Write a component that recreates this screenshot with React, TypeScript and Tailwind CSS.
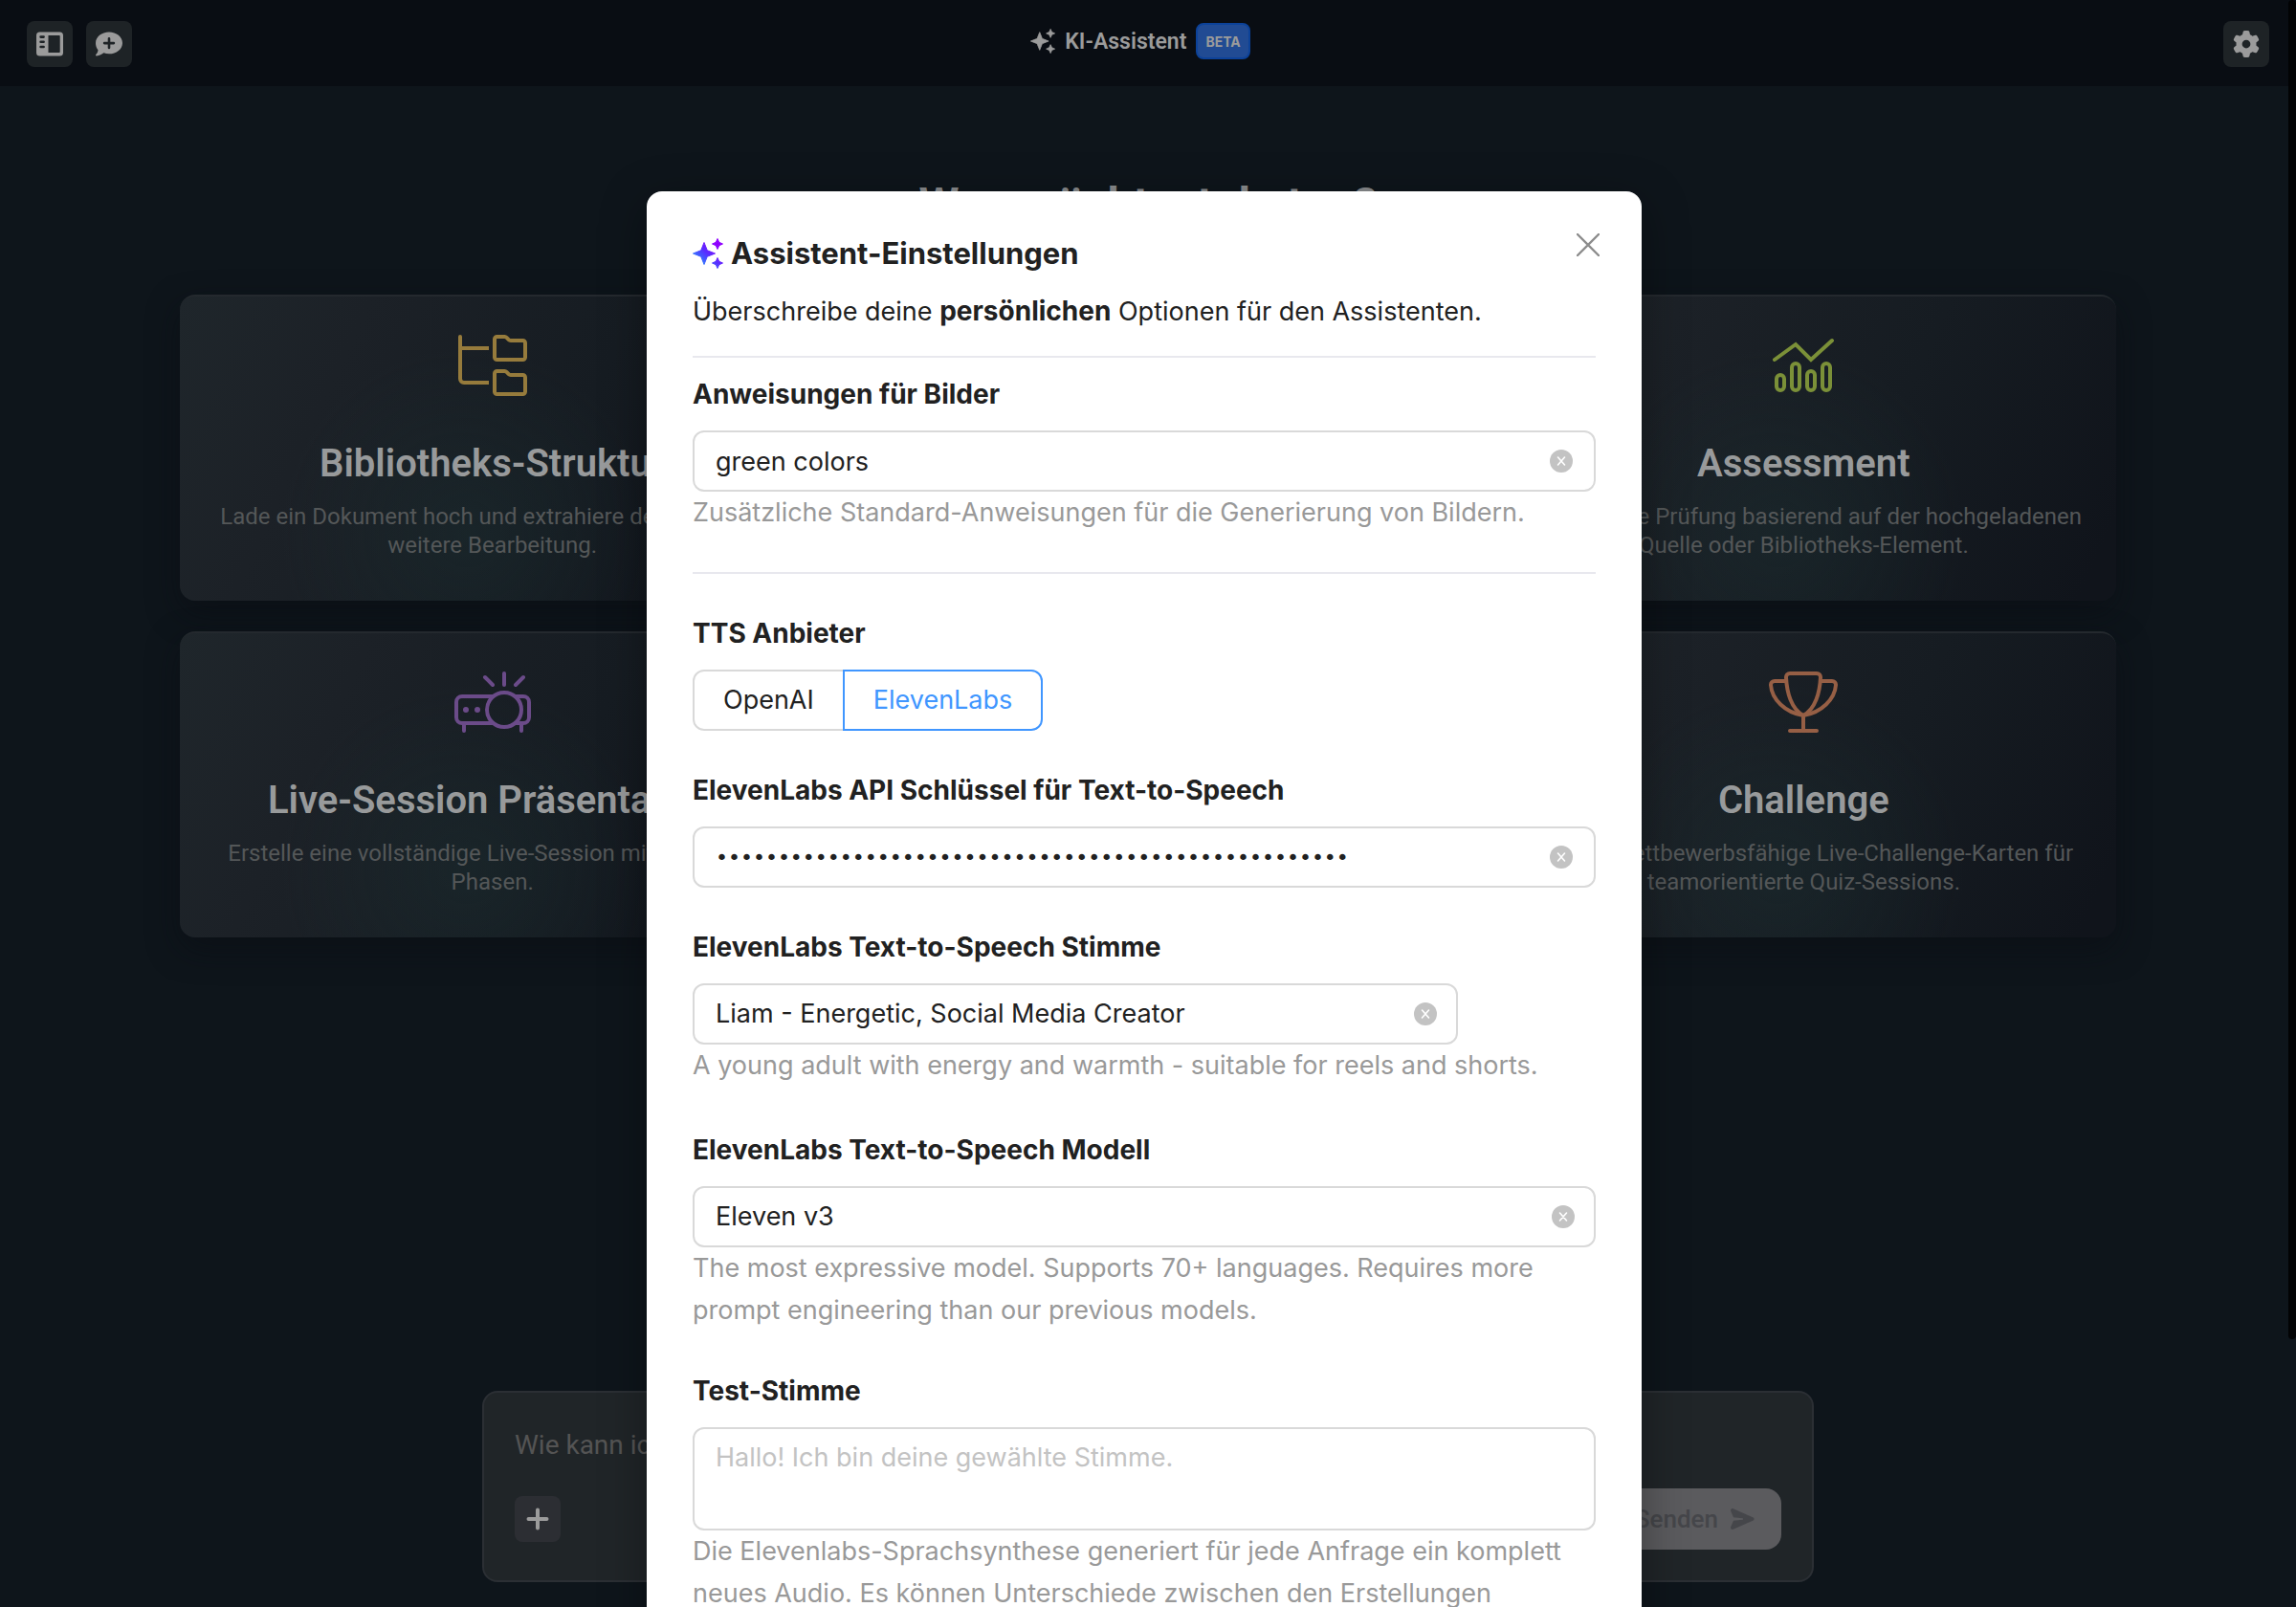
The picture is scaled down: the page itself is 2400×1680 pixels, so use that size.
import { ReactNode, useState } from "react";
import { FaGear } from "react-icons/fa6";

interface CardData {
  title: string;
  text: string;
  color: string;
  column: string;
  icon: ReactNode;
}

const CARDS: CardData[] = [
  {
    title: "Bibliotheks-Struktur",
    text: "Lade ein Dokument hoch und extrahiere den Inhalt für weitere Bearbeitung.",
    color: "text-[#967b3c]",
    column: "col-start-1",
    icon: <FolderTreeIcon />,
  },
  {
    title: "Assessment",
    text: "Erstelle eine Prüfung basierend auf der hochgeladenen Quelle oder Bibliotheks-Element.",
    color: "text-[#7b9038]",
    column: "col-start-3",
    icon: <ChartIcon />,
  },
  {
    title: "Live-Session Präsentation",
    text: "Erstelle eine vollständige Live-Session mit mehreren Phasen.",
    color: "text-[#6b4b89]",
    column: "col-start-1",
    icon: <ProjectorIcon />,
  },
  {
    title: "Challenge",
    text: "Erstelle wettbewerbsfähige Live-Challenge-Karten für teamorientierte Quiz-Sessions.",
    color: "text-[#965f45]",
    column: "col-start-3",
    icon: <TrophyIcon />,
  },
];

const PROVIDERS = ["OpenAI", "ElevenLabs"];

function SparklesPath() {
  return (
    <path
      strokeWidth="1"
      strokeLinejoin="round"
      d="M12 4.500l3 7.600a1.600 1.600 0 0 0 .9.9l7.600 3-7.600 3a1.600 1.600 0 0 0-.9.900l-3 7.600-3-7.600a1.600 1.600 0 0 0-.9-.900l-7.600-3 7.600-3a1.600 1.600 0 0 0 .9-.9zM26 .5l1.700 3.800 3.800 1.700-3.800 1.700-1.700 3.800-1.700-3.800-3.800-1.700 3.800-1.700zM26 20.500l1.700 3.800 3.800 1.700-3.800 1.700-1.700 3.800-1.700-3.800-3.800-1.700 3.800-1.700z"
    />
  );
}

function SidebarIcon() {
  return (
    <svg width="28" height="28" viewBox="0 0 28 28" fill="currentColor">
      <path
        fillRule="evenodd"
        d="M3.500 1.500h21A3.500 3.500 0 0 1 28 5v18a3.500 3.500 0 0 1-3.500 3.500h-21A3.500 3.500 0 0 1 0 23V5a3.500 3.500 0 0 1 3.500-3.500zM12.500 5v18H24a.7.7 0 0 0 .7-.7V5.700A.7.7 0 0 0 24 5zM4.600 5.300a1.300 1.300 0 0 0 0 2.600h3a1.300 1.300 0 0 0 0-2.600zM4.600 10.500a1.300 1.300 0 0 0 0 2.600h3a1.300 1.300 0 0 0 0-2.600zM4.600 15.700a1.300 1.300 0 0 0 0 2.600h3a1.300 1.300 0 0 0 0-2.600z"
      />
    </svg>
  );
}

function NewChatIcon() {
  return (
    <svg width="28" height="28" viewBox="0 0 28 28">
      <path
        fill="currentColor"
        d="M14 1.500c7.700 0 14 5.100 14 11.400s-6.300 11.400-14 11.400c-2 0-3.900-.35-5.600-.95C6.700 24.700 4 26.500.9 26.500a.8.8 0 0 1-.6-1.400c1.200-1.300 2-2.900 2.200-4.900C.9 18.200 0 15.700 0 12.900 0 6.600 6.300 1.500 14 1.500z"
      />
      <path className="stroke-[#1e2326]" strokeWidth="2.600" strokeLinecap="round" d="M14 8.200v9.800M9.100 13.100h9.800" />
    </svg>
  );
}

function FolderTreeIcon() {
  return (
    <svg width="72" height="64" viewBox="0 0 72 64" fill="none" stroke="currentColor" strokeWidth="4">
      <path d="M2 12V46a4 4 0 0 0 4 4H32M2 14H32" />
      <path d="M2 2V14" strokeLinecap="round" />
      <path d="M38 4.500A2.500 2.500 0 0 1 40.500 2h7.800a3 3 0 0 1 2.200.9l2.200 2.200A3 3 0 0 0 55 6h12.500A2.500 2.500 0 0 1 70 8.500v15a2.500 2.500 0 0 1-2.500 2.500h-27A2.500 2.500 0 0 1 38 23.500z" />
      <path d="M38 40.500A2.500 2.500 0 0 1 40.500 38h7.800a3 3 0 0 1 2.200.9l2.200 2.200A3 3 0 0 0 55 42h12.500A2.500 2.500 0 0 1 70 44.500v15a2.500 2.500 0 0 1-2.500 2.500h-27A2.500 2.500 0 0 1 38 59.500z" />
    </svg>
  );
}

function ProjectorIcon() {
  return (
    <svg width="80" height="64" viewBox="0 0 80 64" fill="none" stroke="currentColor" strokeWidth="4" strokeLinecap="round">
      <path strokeLinecap="butt" d="M41 26H8a6 6 0 0 0-6 6v16a6 6 0 0 0 6 6h33M63 26h9a6 6 0 0 1 6 6v16a6 6 0 0 1-6 6h-9" />
      <circle cx="52" cy="40" r="18" />
      <path d="M52 2v12M32 6l8 8M72 6l-8 8M10 56v6M70 56v6" />
      <circle cx="12" cy="40" r="3" fill="currentColor" stroke="none" />
      <circle cx="24" cy="40" r="3" fill="currentColor" stroke="none" />
    </svg>
  );
}

function ChartIcon() {
  return (
    <svg width="64" height="64" viewBox="0 0 64 64" fill="none" stroke="currentColor" strokeWidth="4" strokeLinecap="round">
      <path d="M2 26L24 10L40 26L62 6" />
      <rect x="4" y="42" width="8" height="16" rx="4" />
      <rect x="20" y="30" width="8" height="28" rx="4" />
      <rect x="36" y="38" width="8" height="20" rx="4" />
      <rect x="52" y="30" width="8" height="28" rx="4" />
    </svg>
  );
}

function TrophyIcon() {
  return (
    <svg width="72" height="64" viewBox="0 0 72 64" fill="none" stroke="currentColor" strokeWidth="4" strokeLinecap="round">
      <path d="M22 2h28a4 4 0 0 1 4 4.200C53.300 22 48.500 39.500 36 46 23.500 39.500 18.700 22 18 6.200A4 4 0 0 1 22 2z" />
      <path strokeLinecap="butt" d="M18 10H6a4 4 0 0 0-4 4.200C3 29 17 43 36 46M54 10h12a4 4 0 0 1 4 4.200C69 29 55 43 36 46" />
      <path d="M36 46v16M22 62h28" />
    </svg>
  );
}

function ClearButton({ label, onClick }: { label: string; onClick: () => void }) {
  return (
    <button type="button" aria-label={label} onClick={onClick} className="shrink-0">
      <svg width="24" height="24" viewBox="0 0 24 24">
        <circle cx="12" cy="12" r="12" fill="#c3c3c3" />
        <path d="M8.500 8l7 8M15.500 8l-7 8" stroke="#fff" strokeWidth="1.600" strokeLinecap="round" />
      </svg>
    </button>
  );
}

function Card({ card }: { card: CardData }) {
  return (
    <a
      href="#"
      className={`${card.column} flex flex-col items-center rounded-2xl border-t-2 border-[#24292e] bg-[radial-gradient(circle_at_46%_78%,rgba(28,48,50,0.4),transparent_45%),linear-gradient(115deg,#1f262b,#1c2127_25%,#161c22_60%,#10141b_95%)] px-8 pt-10 pb-[43px] text-center shadow-[0_12px_32px_rgba(10,12,18,0.5)]`}
    >
      <span className={card.color}>{card.icon}</span>
      <h2 className="mt-12 text-[40px] leading-[46px] font-semibold whitespace-nowrap text-[#989a9b]">{card.title}</h2>
      <p className="mt-[17px] text-2xl leading-[30px] text-[#545758]">{card.text}</p>
    </a>
  );
}

function Help({ children }: { children: ReactNode }) {
  return <p className="text-[#999]">{children}</p>;
}

const labelClass = "mb-4 block text-[28px] leading-[44px] font-bold";
const boxClass = "flex h-16 items-center rounded-xl border-2 border-[#d9d9d9] pl-[22px]";
const fieldClass = "h-full min-w-0 flex-1 appearance-none bg-transparent outline-none";

function SettingsModal() {
  const [imageHint, setImageHint] = useState("green colors");
  const [provider, setProvider] = useState("ElevenLabs");
  const [apiKey, setApiKey] = useState("x".repeat(51));
  const [voice, setVoice] = useState("liam");
  const [model, setModel] = useState("v3");

  return (
    <div
      role="dialog"
      aria-labelledby="settings-title"
      className="relative w-full max-w-[1040px] self-start rounded-2xl bg-white px-12 pt-10 pb-10 font-[Inter,sans-serif] text-[27px] leading-[44px] text-[#212121] shadow-[0_12px_48px_rgba(0,0,0,0.35)]"
    >
      <button type="button" aria-label="Schließen" className="absolute top-11 right-11">
        <svg width="24" height="24" viewBox="0 0 24 24" stroke="#8c8c8c" strokeWidth="2.400" strokeLinecap="round">
          <path d="M1 1l22 22M23 1L1 23" />
        </svg>
      </button>

      <h2 id="settings-title" className="flex items-center gap-2 text-[31px] leading-[50px] font-bold">
        <svg width="32" height="32" viewBox="0 0 32 32" fill="url(#spark)" stroke="url(#spark)">
          <defs>
            <linearGradient id="spark" x1="0" y1="28" x2="22" y2="4" gradientUnits="userSpaceOnUse">
              <stop offset="0.2" stopColor="#2f80ff" />
              <stop offset="0.6" stopColor="#5a2bff" />
              <stop offset="1" stopColor="#8f00ff" />
            </linearGradient>
          </defs>
          <SparklesPath />
        </svg>
        Assistent-Einstellungen
      </h2>
      <p className="mt-3.5">
        Überschreibe deine <strong className="text-[28px] leading-none font-bold">persönlichen</strong> Optionen für den Assistenten.
      </p>

      <hr className="mt-6 mb-4 border-t-2 border-[#e8e8ee]" />

      <form className="flex flex-col gap-10">
        <div>
          <label htmlFor="image-hint" className={labelClass}>Anweisungen für Bilder</label>
          <div className={`${boxClass} pr-[22px]`}>
            <input id="image-hint" type="text" className={fieldClass} value={imageHint} onChange={(e) => setImageHint(e.target.value)} />
            <ClearButton label="Anweisungen leeren" onClick={() => setImageHint("")} />
          </div>
          <Help>Zusätzliche Standard-Anweisungen für die Generierung von Bildern.</Help>
        </div>

        <hr className="border-t-2 border-[#e8e8ee]" />

        <fieldset>
          <legend className={labelClass}>TTS Anbieter</legend>
          <div className="flex">
            {PROVIDERS.map((p) => (
              <label
                key={p}
                className={`flex h-16 cursor-pointer items-center border-2 px-[30px] first:rounded-l-xl last:rounded-r-xl last:-ml-0.5 ${
                  p === provider ? "z-10 border-[#4096ff] text-[#4096ff]" : "border-[#d9d9d9]"
                }`}
              >
                <input type="radio" name="provider" className="sr-only" checked={p === provider} onChange={() => setProvider(p)} />
                {p}
              </label>
            ))}
          </div>
        </fieldset>

        <div>
          <label htmlFor="api-key" className={labelClass}>ElevenLabs API Schlüssel für Text-to-Speech</label>
          <div className={`${boxClass} pr-[22px]`}>
            <input
              id="api-key"
              type="password"
              className={`${fieldClass} font-['DejaVu_Sans',sans-serif] text-[22px]`}
              value={apiKey}
              onChange={(e) => setApiKey(e.target.value)}
            />
            <ClearButton label="Schlüssel leeren" onClick={() => setApiKey("")} />
          </div>
        </div>

        <div className="pb-1">
          <label htmlFor="voice" className={labelClass}>ElevenLabs Text-to-Speech Stimme</label>
          <div className={`${boxClass} max-w-[800px] pr-5`}>
            <select id="voice" className={fieldClass} value={voice} onChange={(e) => setVoice(e.target.value)}>
              <option value="" />
              <option value="liam">Liam - Energetic, Social Media Creator</option>
            </select>
            <ClearButton label="Stimme leeren" onClick={() => setVoice("")} />
          </div>
          <Help>A young adult with energy and warmth - suitable for reels and shorts.</Help>
        </div>

        <div>
          <label htmlFor="model" className={labelClass}>ElevenLabs Text-to-Speech Modell</label>
          <div className={`${boxClass} pr-5`}>
            <select id="model" className={fieldClass} value={model} onChange={(e) => setModel(e.target.value)}>
              <option value="" />
              <option value="v3">Eleven v3</option>
            </select>
            <ClearButton label="Modell leeren" onClick={() => setModel("")} />
          </div>
          <Help>
            The most expressive model. Supports 70+ languages. Requires more prompt engineering than our previous models.
          </Help>
        </div>

        <div>
          <label htmlFor="test-voice" className={labelClass}>Test-Stimme</label>
          <textarea
            id="test-voice"
            placeholder="Hallo! Ich bin deine gewählte Stimme."
            className="block h-[108px] w-full resize-none rounded-xl border-2 border-[#d9d9d9] px-[22px] py-2 outline-none placeholder:text-[#c3c3c3]"
          />
          <Help>
            Die Elevenlabs-Sprachsynthese generiert für jede Anfrage ein komplett neues Audio. Es können Unterschiede
            zwischen den Erstellungen
          </Help>
        </div>
      </form>
    </div>
  );
}

export default function App() {
  return (
    <div className="relative flex h-screen flex-col overflow-hidden bg-[#0e151b] font-[Roboto,sans-serif]">
      <header className="grid h-[90px] shrink-0 grid-cols-[1fr_auto_1fr] items-center bg-[#090d13] px-7 text-[#9b9b9b]">
        <div className="flex gap-3.5 pt-0.5">
          <button type="button" aria-label="Seitenleiste" className="flex size-12 items-center justify-center rounded-lg bg-[#1e2326]">
            <SidebarIcon />
          </button>
          <button type="button" aria-label="Neuer Chat" className="flex size-12 items-center justify-center rounded-lg bg-[#1e2326]">
            <NewChatIcon />
          </button>
        </div>
        <div className="flex items-center gap-2.5 pr-4 pb-1">
          <svg width="26" height="26" viewBox="0 0 32 32" fill="currentColor" stroke="currentColor">
            <SparklesPath />
          </svg>
          <h1 className="pt-0.5 text-[23px] font-semibold">KI-Assistent</h1>
          <span className="flex h-[38px] items-center rounded-lg border-2 border-[#0c4299] bg-[#214b93] px-2 pt-0.5 font-[Inter,sans-serif] text-sm font-bold">
            BETA
          </span>
        </div>
        <button type="button" aria-label="Einstellungen" className="mt-0.5 flex size-12 items-center justify-center justify-self-end rounded-lg bg-[#1e2326]">
          <FaGear size={28} />
        </button>
      </header>

      <main className="flex flex-1 flex-col items-center px-[188px] pt-24 pb-[26px]">
        <h2 className="text-5xl leading-[56px] font-bold text-[#8a8c8e]">Was möchtest du tun?</h2>
        <div className="mt-[66px] grid w-full grid-cols-3 gap-8">
          {CARDS.map((card) => (
            <Card key={card.title} card={card} />
          ))}
        </div>

        <form className="mt-auto flex h-[200px] w-full max-w-[1392px] flex-col justify-between rounded-2xl border-2 border-[#2b2f34] bg-[#202528] px-8 pt-8 pb-8">
          <input
            type="text"
            aria-label="Nachricht"
            placeholder="Wie kann ich dir helfen?"
            className="h-11 bg-transparent text-[28px] outline-none placeholder:text-[#545454]"
          />
          <div className="flex items-center justify-between">
            <button type="button" aria-label="Anhang hinzufügen" className="flex size-12 items-center justify-center rounded-lg bg-[#2c2e33]">
              <svg width="24" height="24" viewBox="0 0 24 24" stroke="#9b9b9b" strokeWidth="4" strokeLinecap="round">
                <path d="M12 2.500v19M2.500 12h19" />
              </svg>
            </button>
            <button type="submit" className="flex h-16 items-center gap-3 rounded-2xl bg-[#5b5b5e] px-7 text-[26px] font-medium text-[#45464a]">
              Senden
              <svg width="26" height="26" viewBox="0 0 26 26" fill="currentColor">
                <path d="M2.200 2.200C1.300 2.600.8 3.500 1.100 4.500L4 11.300l9.500 1a.7.7 0 0 1 0 1.400l-9.500 1L1.100 21.500c-.3 1 .2 1.900 1.100 2.300.5.2 1 .1 1.500-.1l21-9.200c1.200-.6 1.200-2.400 0-3l-21-9.200c-.5-.2-1-.3-1.500-.1z" />
              </svg>
            </button>
          </div>
        </form>
      </main>

      <div className="absolute inset-0 flex">
        <div className="flex flex-1 justify-center pt-[200px]">
          <SettingsModal />
        </div>
        <div className="h-5/6 w-2 rounded-full bg-[#020304]" />
      </div>
    </div>
  );
}
